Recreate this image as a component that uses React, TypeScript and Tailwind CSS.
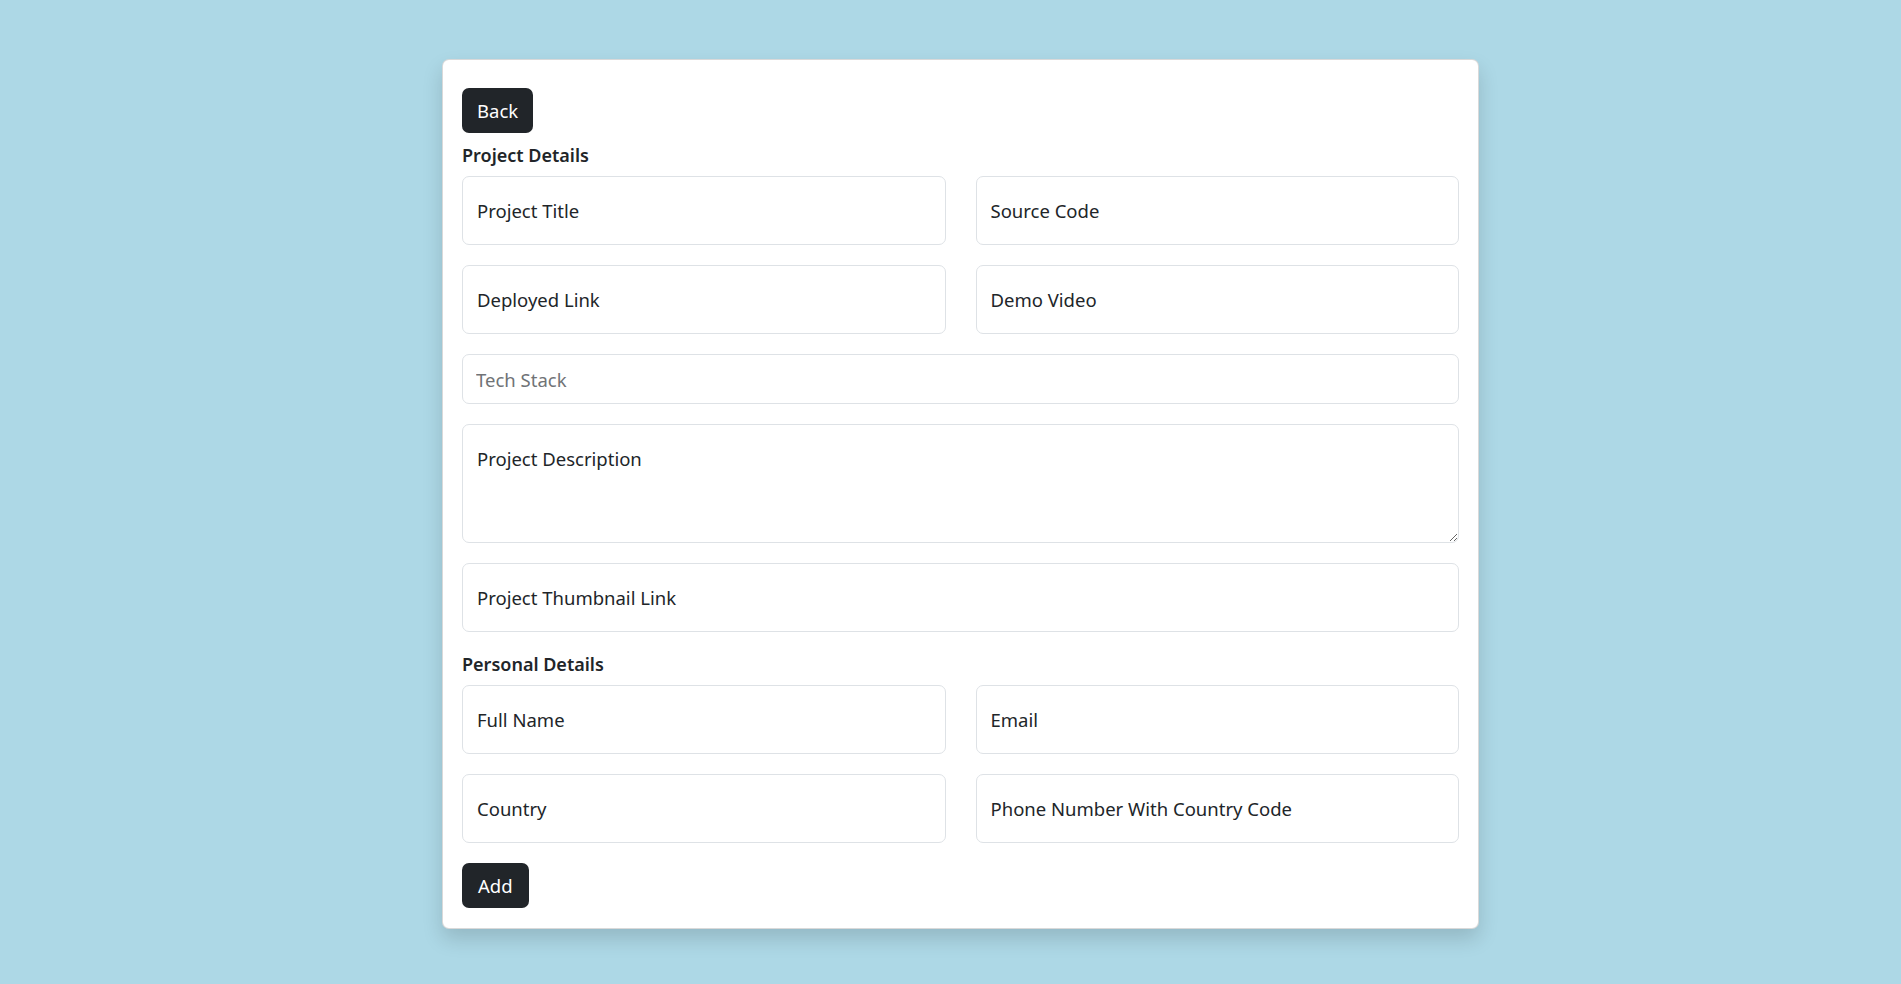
import { useState } from "react";

const font = { fontFamily: '"Noto Sans", "Open Sans", sans-serif' };

const FloatingField = ({ label }: { label: string }) => (
  <input
    type="text"
    placeholder={label}
    className="h-[69px] w-full rounded-[7px] border border-[#dee2e6] bg-white px-[14px] text-[18.5px] text-[#212529] outline-none placeholder:text-[#212529]"
  />
);

export default function App() {
  const [desc, setDesc] = useState("");

  return (
    <div
      className="flex min-h-screen justify-center bg-[#add8e6] pl-[20px] pt-[59px]"
      style={font}
    >
      <form className="flex h-fit w-[1037px] flex-col rounded-[7px] border border-black/15 bg-white px-[19px] pb-[20px] pt-[28px] shadow-[0_10px_20px_rgba(0,0,0,0.15)]">
        <div>
          <button
            type="button"
            className="h-[45px] rounded-[7px] bg-[#212529] px-[15px] text-[18.5px] text-white"
          >
            Back
          </button>
        </div>

        <h6 className="mb-[9px] mt-[10px] text-[18px] font-semibold leading-[24px] text-[#212529]">
          Project Details
        </h6>
        <div className="grid grid-cols-2 gap-x-[30px] gap-y-[20px]">
          <FloatingField label="Project Title" />
          <FloatingField label="Source Code" />
          <FloatingField label="Deployed Link" />
          <FloatingField label="Demo Video" />
        </div>

        <input
          type="text"
          placeholder="Tech Stack"
          className="mt-[20px] h-[50px] w-full rounded-[7px] border border-[#dee2e6] px-[13px] text-[18.5px] text-[#212529] outline-none placeholder:text-[#707376]"
        />

        <textarea
          value={desc}
          onChange={(e) => setDesc(e.target.value)}
          placeholder="Project Description"
          className="mt-[20px] h-[119px] w-full rounded-[7px] border border-[#dee2e6] px-[14px] pt-[20px] text-[18.5px] leading-[28px] text-[#212529] outline-none placeholder:text-[#212529]"
        />

        <div className="mt-[20px]">
          <FloatingField label="Project Thumbnail Link" />
        </div>

        <h6 className="mb-[9px] mt-[20px] text-[18px] font-semibold leading-[24px] text-[#212529]">
          Personal Details
        </h6>
        <div className="grid grid-cols-2 gap-x-[30px] gap-y-[20px]">
          <FloatingField label="Full Name" />
          <FloatingField label="Email" />
          <FloatingField label="Country" />
          <FloatingField label="Phone Number With Country Code" />
        </div>

        <div className="mt-[20px]">
          <button
            type="button"
            className="h-[45px] rounded-[7px] bg-[#212529] px-[16px] text-[18.5px] text-white"
          >
            Add
          </button>
        </div>
      </form>
    </div>
  );
}
